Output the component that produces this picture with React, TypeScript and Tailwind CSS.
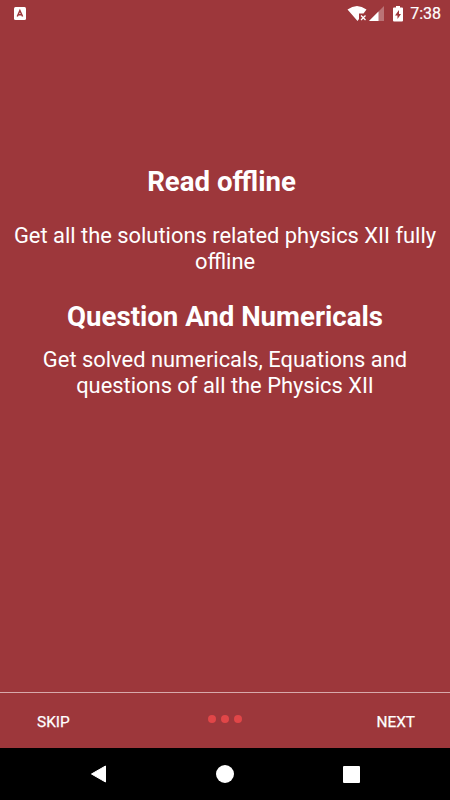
export default function App() {
  return (
    <div className="flex h-[800px] w-[450px] flex-col overflow-hidden bg-[#9d373b] font-[Roboto,sans-serif] text-white">
      <header className="flex h-[27px] shrink-0 items-center justify-between pl-[14px] pr-[9px]">
        <svg width="12" height="14" viewBox="0 0 12 14">
          <rect width="12" height="13" rx="1.5" fill="white" />
          <path d="M3.3 9.500 5.9 3.500 8.6 9.500M4.2 7.8h3.5" stroke="#9d373b" strokeWidth="1.5" fill="none" />
        </svg>
        <div className="flex items-center">
          <svg width="60" height="18" viewBox="0 0 60 18">
            <path d="M.5 4.500Q10-2.500 19.500 4.500L16.500 8.500H12V14L10.500 16Z" fill="white" />
            <path d="m14 10.500 4.500 4.500m0-4.500L14 15" stroke="white" strokeWidth="1.3" />
            <path d="M22 16 37 1V16Z" fill="white" fillOpacity=".3" />
            <path d="M22 16 31.500 6.500V16Z" fill="white" />
            <path d="M47 2.500h2V1h4v1.500h2q1 0 1 1V15.500q0 1-1 1h-8q-1 0-1-1v-12q0-1 1-1Z" fill="white" />
            <path d="m52 5-4 5.500h2.500V14l3.500-5h-2Z" fill="#9d373b" />
          </svg>
          <span className="ml-[3px] text-[16px] leading-[18px] [-webkit-text-stroke:0.2px_white]">7:38</span>
        </div>
      </header>
      <main className="flex flex-1 flex-col items-center pt-[139px] text-center">
        <h1 className="pr-[7px] text-[27.600px] font-bold leading-[32px]">Read offline</h1>
        <p className="mt-[25px] text-[21.900px] leading-[26px]">Get all the solutions related physics XII fully<br />offline</p>
        <h2 className="mt-[26px] text-[27.600px] font-bold leading-[32px]">Question And Numericals</h2>
        <p className="mt-[14px] text-[21.900px] leading-[26px]">Get solved numericals, Equations and<br />questions of all the Physics XII</p>
      </main>
      <footer className="grid h-[56px] shrink-0 grid-cols-3 items-center border-t border-[#d8a9ab] pl-[37px] pr-[35px] text-[15.400px]">
        <span className="pt-[5px] [-webkit-text-stroke:0.25px_white]">SKIP</span>
        <div className="flex justify-center gap-[5px] pb-[3px] pr-[2px]">
          <i className="size-2 rounded-full bg-[#e14648]" />
          <i className="size-2 rounded-full bg-[#e14648]" />
          <i className="size-2 rounded-full bg-[#e14648]" />
        </div>
        <span className="pt-[5px] text-right [-webkit-text-stroke:0.25px_white]">NEXT</span>
      </footer>
      <nav className="flex h-[52px] shrink-0 items-center justify-between bg-black px-[90px]">
        <svg width="17" height="18" viewBox="0 0 17 18"><path d="M1.500 9 15.500 1V17Z" fill="white" stroke="white" strokeLinejoin="round" /></svg>
        <i className="size-[18px] rounded-full bg-white" />
        <i className="size-[17px] rounded-[1px] bg-white" />
      </nav>
    </div>
  );
}
